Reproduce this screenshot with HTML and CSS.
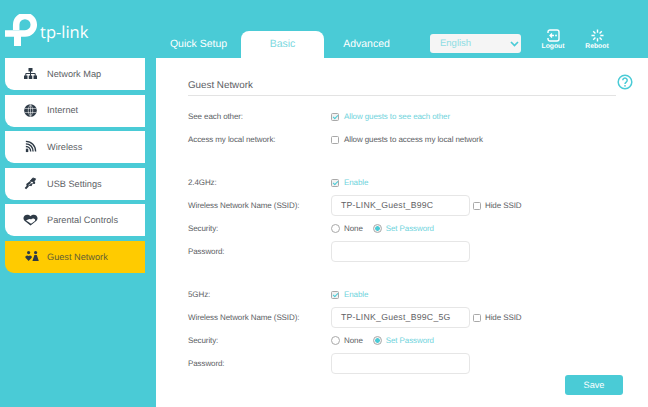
FILE: index.html
```html
<!DOCTYPE html>
<html lang="en">
<head>
<meta charset="utf-8">
<title>TP-Link Guest Network</title>
<link rel="stylesheet" href="styles.css">
</head>
<body>
<header class="top">
  <div class="logo">
    <svg class="logo-mark" width="33" height="32" viewBox="0 0 33 32"><path d="M0 19.500H20A8.800 8.800 0 1 0 11.200 10.800V16" fill="none" stroke="#fff" stroke-width="6.500"/><path d="M12.500 19V32" fill="none" stroke="#fff" stroke-width="7"/></svg>
    <span class="logo-text">tp-link</span>
  </div>
  <nav class="tabs">
    <a class="tab">Quick Setup</a>
    <a class="tab active">Basic</a>
    <a class="tab">Advanced</a>
  </nav>
  <div class="lang"><span>English</span><svg width="9" height="6" viewBox="0 0 9 6"><path d="M1 1l3.500 3.500L8 1" fill="none" stroke="#4acbd6" stroke-width="1.700"/></svg></div>
  <div class="tool tool-logout">
    <svg width="13" height="13" viewBox="0 0 13 13"><path d="M1 4V3a2 2 0 0 1 2-2h7a2 2 0 0 1 2 2v7a2 2 0 0 1-2 2H3a2 2 0 0 1-2-2V9" fill="none" stroke="#fff" stroke-width="1.400"/><path d="M3 6.500h4M5 4.500l-2 2 2 2" fill="none" stroke="#fff" stroke-width="1.300"/><circle cx="9" cy="6.500" r=".9" fill="#fff"/></svg>
    <span>Logout</span>
  </div>
  <div class="tool tool-reboot">
    <svg width="13" height="13" viewBox="0 0 14 14"><path d="M7 .5v3.500M7 10v3.500M.5 7H4M10 7h3.500M2.400 2.400l2.400 2.400M9.200 9.200l2.400 2.400M2.400 11.600l2.400-2.400M9.200 4.800l2.400-2.400" fill="none" stroke="#fff" stroke-width="1.500"/></svg>
    <span>Reboot</span>
  </div>
</header>
<div class="body">
  <aside class="side">
    <a class="item"><svg class="ico ico-short" viewBox="0 0 13 11" preserveAspectRatio="none"><path d="M4.500 0h4v3.500h-4zM0 7.500h3.500V11H0zM4.750 7.500h3.500V11h-3.500zM9.500 7.500H13V11H9.500z" fill="#2e3a46"/><path d="M6.500 3v5M1.800 8V5.500h9.400V8" fill="none" stroke="#2e3a46"/></svg><span>Network Map</span></a>
    <a class="item"><svg class="ico" viewBox="0 0 14 14"><circle cx="7" cy="7" r="6.800" fill="#2e3a46"/><path d="M.7 4.800h12.600M.7 9.200h12.600M7 .7v12.600M7 .7C3.800 4 3.800 10 7 13.300M7 .7c3.200 3.300 3.200 9.300 0 12.600" fill="none" stroke="#fff" stroke-width=".6"/></svg><span>Internet</span></a>
    <a class="item"><svg class="ico" viewBox="0 0 14 14"><path d="M2 1.500c6 0 10.500 4.500 10.500 11M2 4.200c4.500 0 7.800 3.500 7.800 8.300M2 7c3 0 5.200 2.400 5.200 5.500" fill="none" stroke="#2e3a46" stroke-width="1.500"/><path d="M2 9.300h2.600V13H2z" fill="#2e3a46"/></svg><span>Wireless</span></a>
    <a class="item"><svg class="ico" viewBox="0 0 14 14"><path d="M1.500 12.500L4 10l-.4-2L7 5.500" fill="none" stroke="#2e3a46" stroke-width="2.200"/><path d="M5 9l3 .3 1-2.800M6.500 4.500L9.500 1l3 1-1.500 3z" fill="#2e3a46" stroke="#2e3a46" stroke-width=".9"/><circle cx="10.800" cy="6.300" r="1.300" fill="#2e3a46"/></svg><span>USB Settings</span></a>
    <a class="item"><svg class="ico ico-wide" viewBox="0 0 15 14" preserveAspectRatio="none"><path d="M7.500 13.500L1.500 8C-.8 5 1 1 4.200 1c1.500 0 2.500.7 3.300 1.700C8.300 1.700 9.300 1 10.800 1 14 1 15.800 5 13.500 8z" fill="#2e3a46"/><path d="M5 6.500c1-1 2-.8 3-.2 1-1.800 4-1.400 4.200.6.100 1.300-2.200 3-4.200 4.500L5.500 9.300 3 7.700z" fill="#fff"/></svg><span>Parental Controls</span></a>
    <a class="item current"><svg class="ico ico-guest" viewBox="0 0 14 10"><circle cx="3.600" cy="1.600" r="1.600" fill="#2e3a46"/><circle cx="10.600" cy="1.600" r="1.600" fill="#2e3a46"/><path d="M3.600 10L.5 6.700C-.3 5 2.200 3.500 3.600 5 5 3.500 7.500 5 6.700 6.700zM7.400 10l2-6h2.400l2 6z" fill="#2e3a46"/></svg><span>Guest Network</span></a>
  </aside>
  <main class="main">
    <div class="title-row">
      <h1 class="title">Guest Network</h1>
      <svg class="help" width="16" height="16" viewBox="0 0 16 16"><circle cx="8" cy="8" r="6.800" fill="none" stroke="#4acbd6" stroke-width="1.500"/><path d="M5.800 6.300a2.200 2.200 0 1 1 3.400 1.800C8.400 8.700 8 9 8 10" fill="none" stroke="#4acbd6" stroke-width="1.500"/><circle cx="8" cy="11.800" r=".9" fill="#4acbd6"/></svg>
    </div>
    <section class="group">
      <div class="row"><label class="lab">See each other:</label><div class="ctl"><i class="box on"></i><span class="on-text">Allow guests to see each other</span></div></div>
      <div class="row"><label class="lab">Access my local network:</label><div class="ctl"><i class="box"></i><span>Allow guests to access my local network</span></div></div>
    </section>
    <section class="group">
      <div class="row"><label class="lab">2.4GHz:</label><div class="ctl"><i class="box on"></i><span class="on-text">Enable</span></div></div>
      <div class="row"><label class="lab">Wireless Network Name (SSID):</label><div class="ctl"><div class="input">TP-LINK_Guest_B99C</div><i class="box hide"></i><span>Hide SSID</span></div></div>
      <div class="row"><label class="lab">Security:</label><div class="ctl"><i class="radio"></i><span>None</span><i class="radio on"></i><span class="on-text">Set Password</span></div></div>
      <div class="row"><label class="lab">Password:</label><div class="ctl"><div class="input"></div></div></div>
    </section>
    <section class="group">
      <div class="row"><label class="lab">5GHz:</label><div class="ctl"><i class="box on"></i><span class="on-text">Enable</span></div></div>
      <div class="row"><label class="lab">Wireless Network Name (SSID):</label><div class="ctl"><div class="input">TP-LINK_Guest_B99C_5G</div><i class="box hide"></i><span>Hide SSID</span></div></div>
      <div class="row"><label class="lab">Security:</label><div class="ctl"><i class="radio"></i><span>None</span><i class="radio on"></i><span class="on-text">Set Password</span></div></div>
      <div class="row"><label class="lab">Password:</label><div class="ctl"><div class="input"></div></div></div>
    </section>
    <div class="actions"><button class="save">Save</button></div>
  </main>
</div>
</body>
</html>
```
FILE: styles.css
```css
* { box-sizing: border-box; }
html, body { margin: 0; height: 100%; }
body {
  width: 648px; height: 407px; overflow: hidden;
  background: #4acbd6; color: #5b5e64;
  font-family: "Liberation Sans", Arial, sans-serif; font-size: 8px; letter-spacing: -.1px;
  text-rendering: geometricPrecision;
  display: flex; flex-direction: column;
}
.top { height: 58px; flex: none; display: flex; align-items: flex-end; position: relative; letter-spacing: 0; }
.logo { width: 156px; height: 58px; padding: 14px 0 0 5px; display: flex; align-items: flex-start; }
.logo-mark { flex: none; margin-right: 2px; }
.logo-text { color: #fff; font-family: "Open Sans", sans-serif; font-size: 16.500px; line-height: 22px; margin-top: 7px; }
.tabs { display: flex; height: 27px; }
.tab { width: 85px; text-align: center; color: #fff; font-size: 10.500px; line-height: 27px; }
.tab.active { width: 83px; background: #fff; color: #7bd8e0; border-radius: 8px 8px 0 0; }
.lang {
  width: 91px; height: 19px; margin: 0 0 5px 21px; background: #f5f5f5; border-radius: 3px;
  color: #8fdde4; font-size: 9.500px; display: flex; align-items: center; justify-content: space-between; padding: 0 2px 0 10px;
}
.tool { display: flex; flex-direction: column; align-items: center; color: #fff; font-size: 6.800px; font-weight: bold; margin-bottom: 8px; }
.tool svg { flex: none; margin-bottom: 1px; }
.tool-logout { width: 30px; margin-left: 17px; }
.tool-reboot { width: 30px; margin-left: 14px; }

.body { flex: 1; display: flex; min-height: 0; }
.side { width: 156px; flex: none; padding-left: 5px; display: flex; flex-direction: column; gap: 4.600px; letter-spacing: 0; }
.item {
  width: 140px; height: 32px; background: #fff; border-radius: 0 0 0 9px;
  display: flex; align-items: center; padding: 0 0 .5px 19px; font-size: 9.200px; color: #5b5e64;
}
.item.current { background: #ffcb00; color: #5f5c35; }
.ico { width: 13px; height: 13px; margin-right: 10px; flex: none; }
.ico-short { height: 11px; }
.ico-wide { width: 15px; height: 12px; margin: 0 9px 0 -1px; }
.ico-guest { width: 14px; height: 10px; margin: -2px 9px 0 0; transform: translateX(1px); }

.main { flex: 1; background: #fff; padding: 19px 25px 0 32px; display: flex; flex-direction: column; }
.title-row { display: flex; align-items: flex-start; height: 19px; margin-right: -10px; }
.title { flex: 1; margin: 0; font-size: 9.800px; font-weight: normal; letter-spacing: 0; color: #5b5e64; height: 19px; line-height: 18px; border-bottom: 1px solid #e3e3e3; }
.help { flex: none; margin: -3px 0 0 1px; }
.group { margin-bottom: 20px; }
.group:first-of-type { padding-top: 9px; }
.row { display: flex; align-items: center; height: 23px; }
.lab { width: 143px; flex: none; }
.ctl { display: flex; align-items: center; }
.on-text { color: #6fd3dc; }
.box { width: 8px; height: 8px; border: 1px solid #a9a9a9; border-radius: 1.500px; margin-right: 5px; flex: none; position: relative; background: #fff; }
.box.on { background: #f2f2f2; }
.box.on::after { content: ""; position: absolute; left: 1px; top: 1px; width: 4px; height: 2px; border-left: 1.200px solid #4acbd6; border-bottom: 1.200px solid #4acbd6; transform: rotate(-45deg); }
.box.hide { margin: 0 4px 0 3px; }
.radio { width: 9px; height: 9px; border: 1px solid #a9a9a9; border-radius: 50%; margin-right: 4px; flex: none; background: #fff; }
.radio.on { margin-left: 10px; background: radial-gradient(circle, #4acbd6 0 2px, #f2f2f2 2.600px); }
.input { width: 139px; height: 21px; border: 1px solid #e6e6e6; border-radius: 4px; padding-left: 9px; line-height: 19px; font-size: 8.700px; letter-spacing: .25px; color: #5f6266; }
.actions { display: flex; justify-content: flex-end; margin-top: -20px; }
.save { width: 58px; height: 20px; border: 0; border-radius: 3px; background: #4acbd6; color: #fff; font: 9.200px "Liberation Sans", Arial, sans-serif; padding: 0; text-rendering: geometricPrecision; }
```
